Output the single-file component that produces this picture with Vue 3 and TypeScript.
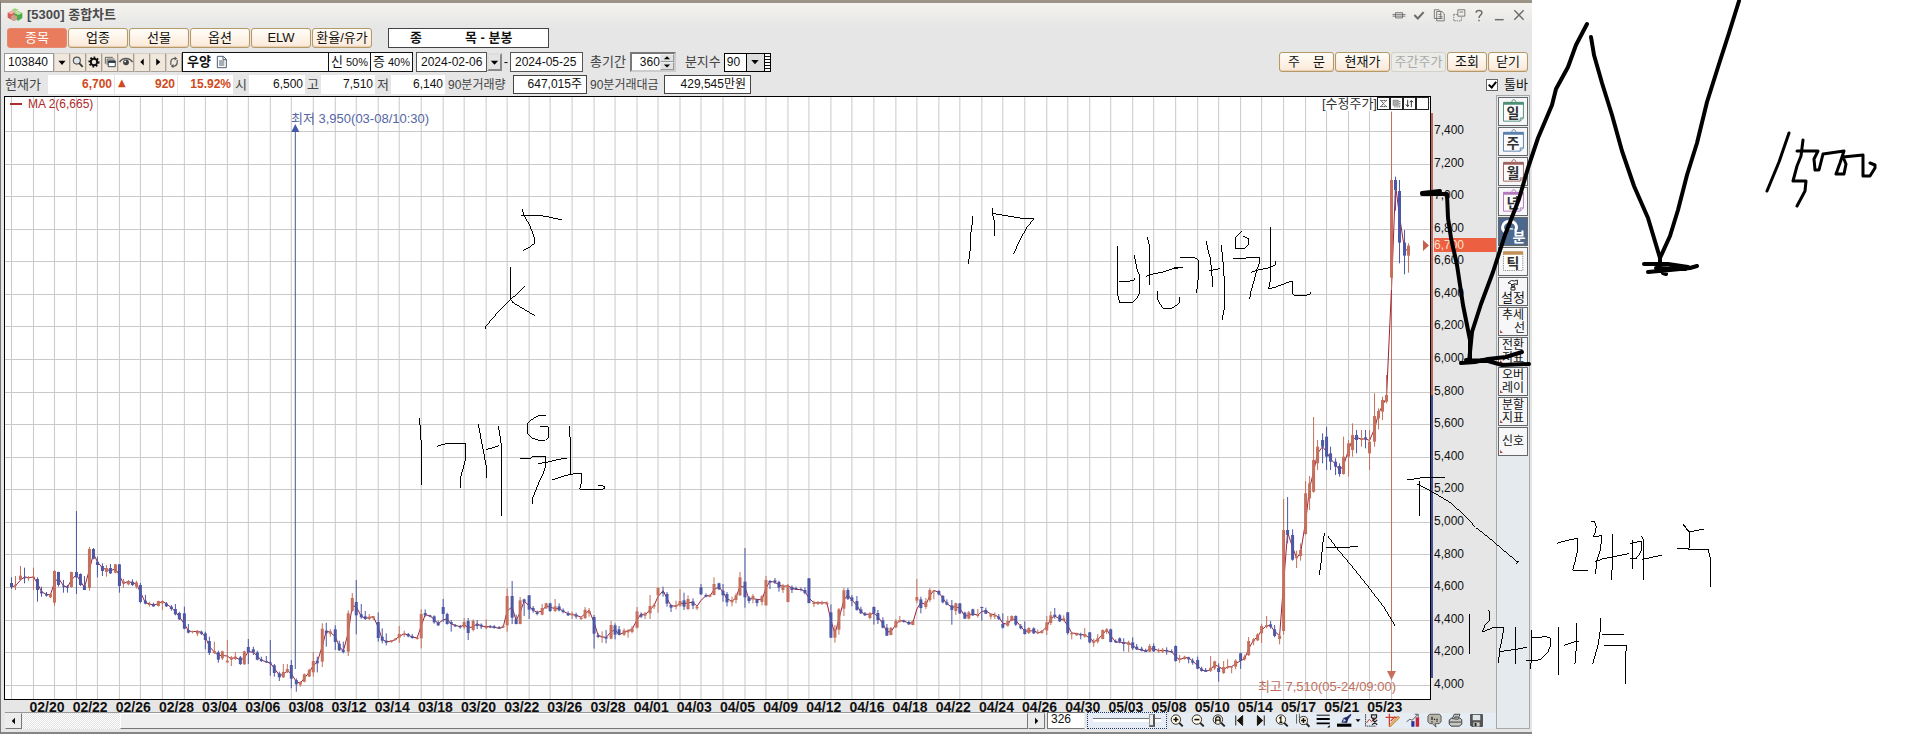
<script setup lang="ts">
import { computed, ref } from 'vue'

type Candle = { x: number; up: boolean; high: number; top: number; bottom: number; low: number }

/* direction, high, body top, body bottom, low; levels are thirds of a pixel */
const series = `
b 262 279 291 297|r 258 284 287 300|r 228 257 270 272|b 233 262 264 280|r 258 262 265 272|r 233 260 264 300|b 262 267 300 335|b 290 304 310 320|b 306 312 317 320|r 310 312 322 324
r 240 243 338 347|b 245 246 285 290|b 270 287 290 308|b 285 290 293 308|r 245 246 291 293|b 63 246 262 312|b 250 252 285 288|b 258 287 300 300|r 171 177 294 302|b 174 177 206 208
b 200 215 225 262|b 220 228 243 258|r 225 234 246 260|b 222 234 250 252|r 222 223 248 250|b 222 223 288 308|r 267 274 280 292|r 270 273 283 286|b 268 275 285 288|r 272 277 290 296
b 279 285 336 340|b 315 332 341 343|r 335 342 345 350|b 338 342 349 351|r 332 333 348 350|r 332 334 340 360|b 336 340 349 351|b 345 350 357 362|b 342 357 373 376|b 365 369 388 390
b 350 370 416 418|b 402 420 428 430|r 422 423 426 430|r 420 424 431 438|b 422 425 431 435|b 425 430 450 478|b 440 453 489 495|r 455 483 489 492|b 482 487 509 518|r 482 484 505 510
r 450 512 517 518|r 498 502 509 528|r 486 500 507 510|b 498 502 522 525|r 482 484 523 524|b 447 471 486 522|b 470 478 487 495|b 482 487 509 511|b 500 508 513 516|b 498 513 517 519
b 450 517 521 557|b 522 526 549 560|b 545 550 562 573|r 522 546 562 564|r 522 537 547 549|b 510 525 566 595|b 565 570 583 605|r 574 576 584 590|r 550 553 575 577|r 536 540 560 561
r 486 513 547 560|b 500 512 520 547|r 400 416 515 531|b 398 422 430 470|r 417 424 431 440|b 406 418 456 480|b 452 461 481 483|b 455 480 486 490|r 361 370 485 498|r 309 324 363 365
b 270 336 376 433|b 342 373 382 386|b 363 379 387 390|r 372 380 387 390|r 378 379 384 390|b 367 396 444 455|b 415 440 452 460|b 430 452 458 466|r 450 451 456 458|r 444 446 450 452
r 408 432 443 458|r 422 431 434 440|b 429 432 439 442|b 432 438 444 446|r 441 443 447 449|r 358 372 445 475|b 358 369 376 380|b 374 377 380 382|b 376 379 397 401|b 392 397 406 408
b 327 351 372 396|b 368 372 402 404|b 390 396 402 425|b 402 405 409 411|b 405 409 412 416|r 384 396 412 418|b 384 393 429 450|r 388 393 420 424|b 390 403 408 417|b 400 404 409 417
r 388 410 414 418|b 405 409 411 414|b 405 409 413 416|b 408 412 416 417|r 405 408 412 414|r 295 318 406 425|b 273 318 383 402|b 374 388 402 403|r 321 331 402 403|b 326 328 336 378
b 315 316 359 387|b 348 354 362 368|b 362 367 372 376|r 342 354 374 376|r 338 340 355 357|b 338 340 363 366|r 327 349 363 366|b 340 349 361 364|b 355 361 366 370|b 364 370 376 378
r 365 371 376 387|b 368 374 380 386|r 380 383 387 390|r 351 359 384 387|r 354 363 370 380|b 375 381 431 476|b 430 436 441 444|r 424 439 443 458|b 420 441 446 460|r 393 405 446 448
b 400 406 434 448|b 408 418 434 436|r 415 421 434 438|r 418 422 427 443|r 408 415 426 430|r 351 364 413 416|b 367 374 380 384|r 366 370 377 387|r 315 348 370 387|r 340 345 350 357
r 292 294 316 368|b 290 306 310 320|b 306 312 341 350|b 343 345 353 366|r 332 345 350 358|r 297 333 347 350|b 308 331 350 360|r 316 327 357 360|b 325 334 347 357|r 345 350 355 360
b 282 292 313 315|b 310 315 320 322|r 312 316 320 322|r 262 282 315 316|b 278 280 298 300|b 282 302 316 335|b 306 312 337 349|r 320 330 337 349|r 310 316 330 340|r 246 262 316 318
b 174 275 322 353|b 318 322 333 340|r 312 318 328 340|b 326 329 339 349|r 315 319 336 346|r 258 270 346 347|b 270 273 278 297|b 264 271 276 282|b 272 276 293 305|r 282 286 300 309
r 282 288 336 337|b 286 291 300 309|b 290 294 297 300|b 292 297 300 304|b 292 300 309 313|b 264 265 339 340|r 332 338 342 351|r 333 339 342 345|r 332 338 341 345|r 334 339 343 345
b 343 367 443 444|r 405 418 443 458|r 354 358 419 434|r 294 301 356 378|b 294 300 327 330|b 315 322 333 349|b 318 333 360 362|b 350 358 370 372|b 366 370 376 378|r 366 370 384 388
b 349 351 370 404|b 360 369 390 402|b 382 391 413 415|b 402 413 437 438|r 411 414 435 436|r 387 393 412 414|r 378 390 395 398|b 389 392 396 398|b 392 396 403 405|r 391 393 405 406
r 267 321 332 340|b 320 328 354 370|r 324 334 351 357|r 294 300 330 336|r 300 302 305 328|b 300 303 313 316|b 315 318 337 340|b 328 337 344 346|b 330 346 360 404|r 338 340 363 375
b 339 340 370 372|b 365 368 386 387|r 363 367 386 388|b 356 358 376 378|r 357 375 378 383|b 350 351 354 392|b 353 360 371 372|r 370 373 380 388|r 367 376 380 387|b 372 380 387 390
b 370 402 413 416|r 378 393 407 410|r 376 378 393 394|b 376 378 404 408|b 402 408 415 418|b 394 417 432 434|r 412 414 429 432|b 412 415 430 432|r 418 427 430 432|r 420 423 429 431
r 378 397 421 435|r 364 376 399 405|b 354 374 380 386|b 372 376 394 396|r 376 385 390 394|b 366 367 429 434|r 426 429 433 448|r 428 432 436 438|b 428 432 436 448|r 414 432 440 443
b 426 427 457 460|r 446 453 459 470|r 432 445 455 460|r 418 420 447 448|r 414 418 426 432|b 416 418 456 457|b 448 453 457 459|b 442 445 455 460|b 445 457 462 484|r 452 457 465 486
b 442 457 475 480|b 462 470 478 480|b 470 476 482 484|b 476 481 486 486|r 462 468 485 486|b 460 468 484 486|r 475 480 484 489|r 474 481 485 489|b 472 480 484 494|b 478 484 487 489
b 466 468 513 515|r 495 505 510 518|r 497 500 507 509|b 500 502 508 520|b 505 512 518 524|b 500 510 536 538|b 530 536 543 545|b 534 540 545 546|r 498 533 542 546|r 512 514 535 540
b 520 534 546 575|r 513 531 549 552|r 508 530 533 537|r 528 530 533 550|r 508 512 530 538|b 488 490 512 537|r 494 500 508 512|r 441 453 495 498|r 444 448 454 466|r 430 433 451 453
r 402 408 430 459|r 378 405 410 415|b 393 403 410 416|b 405 418 438 442|r 430 437 447 463|r 27 120 423 434|b 21 120 135 160|b 118 135 209 212|r 182 198 205 234|r 160 180 198 212
r -27 10 132 135|r -42 -20 25 60|r -219 -90 5 8|r -150 -130 -80 -60|b -170 -150 -130 -80|b -190 -160 -100 -60|b -130 -110 -85 -60|b -95 -85 -70 -45|b -80 -72 -48 -40|r -160 -100 -48 -46
r -150 -140 -100 -40|r -200 -165 -120 -100|b -180 -165 -150 -110|r -180 -155 -150 -130|b -180 -158 -152 -125|r -180 -145 -110 -60|r -290 -222 -145 -130|r -245 -237 -215 -182|r -280 -270 -235 -210|r -345 -285 -265 -260
r -930 -930 -637 -600|b -940 -930 -900 -838|b -930 -897 -742 -680|b -780 -742 -703 -647|r -740 -733 -703 -652`

const pitch = 4.315
const firstX = 11.5
const levelY = (v: number) => 490 + v / 3

const candles = computed<Candle[]>(() =>
  series.trim().split(/[|\n]/).map((row, i) => {
    const [kind, ...n] = row.trim().split(' ')
    const [high, top, bottom, low] = n.map((v) => levelY(Number(v)))
    return { x: Math.round(firstX + i * pitch - 0.5), up: kind === 'r', high, top, bottom, low }
  }),
)
const average = computed(() =>
  candles.value
    .map((c, i, all) => {
      const close = (k: Candle) => (k.up ? k.top : k.bottom)
      const p = all[Math.max(0, i - 1)]
      return `${c.x + 0.5},${((close(c) + close(p)) / 2).toFixed(1)}`
    })
    .join(' '),
)
const columns = Array.from({ length: 65 }, (_, i) => Math.round(11 + i * 21.575) + 0.5)
const rows = Array.from({ length: 18 }, (_, i) => Math.round(131 + i * 32.57) + 0.5)
const prices = Array.from({ length: 18 }, (_, i) => (7400 - i * 200).toLocaleString('en-US'))
const dates = '02/20 02/22 02/26 02/28 03/04 03/06 03/08 03/12 03/14 03/18 03/20 03/22 03/26 03/28 04/01 04/03 04/05 04/09 04/12 04/16 04/18 04/22 04/24 04/26 04/30 05/03 05/08 05/10 05/14 05/17 05/21 05/23'.split(' ')

const tabs = ['종목', '업종', '선물', '옵션', 'ELW', '환율/유가']
const active = ref('종목')
const code = ref('103840')
const fromDate = ref('2024-02-06')
const toDate = ref('2024-05-25')
const span = ref('360')
const unit = ref('90')
const count = ref('326')
const zoomLevel = ref(90)
const showTools = ref(true)

const calendars = [
  { label: '일', color: '#4f8f74' },
  { label: '주', color: '#5b82ad' },
  { label: '월', color: '#a0635f' },
  { label: '년', color: '#b479bd' },
]
const tools = ['추세 선', '전환 지표', '오버 레이', '분할 지표', '신호']
</script>

<template>
  <div class="desk">
    <main class="window">
      <header class="title">
        <svg class="logo" viewBox="0 0 48 42"><path d="M2 14l12-6 10 5v16l-10 6-12-6z" fill="#d95b57" /><path d="M2 14l12-6 10 5-11 6z" fill="#f4b3ae" /><path d="M13 6l10-5 12 4-10 7z" fill="#a5d27c" /><path d="M22 16l12-6 12 5v15l-12 8-12-6z" fill="#4da84a" /><path d="M22 16l12-6 12 5-12 6z" fill="#b8e19a" /><path d="M12 24l8-4 10 5v10l-9 5-9-5z" fill="#c8a08a" /></svg>
        <h1>[5300] 종합차트</h1>
        <nav class="winbtns">
          <button aria-label="연결"><svg viewBox="0 0 48 48"><path d="M2 22h44M2 28h44M12 16h24v18H12z" /></svg></button>
          <button aria-label="고정"><svg viewBox="0 0 48 48"><path d="M8 24l12 12 20-22" stroke-width="7" /></svg></button>
          <button aria-label="복사"><svg viewBox="0 0 48 48"><path d="M8 6h16l6 6v24H8zM16 12h18l8 8v24H16zM22 22h10M22 30h14M22 36h14" /></svg></button>
          <button aria-label="분리"><svg viewBox="0 0 48 48"><path d="M20 6h24v22H20zM26 14h12" /><path d="M6 22h12M6 22v22h26V32" stroke-dasharray="5 3" /></svg></button>
          <button aria-label="도움말"><svg viewBox="0 0 48 48"><path d="M14 16c0-10 20-10 20 0 0 8-10 8-10 18M24 40v5" stroke-width="5" /></svg></button>
          <button aria-label="최소화"><svg viewBox="0 0 48 48"><path d="M10 40h30" stroke-width="5" /></svg></button>
          <button aria-label="창 닫기"><svg viewBox="0 0 48 48"><path d="M8 8l32 32M40 8L8 40" stroke-width="5" /></svg></button>
        </nav>
      </header>

      <div class="line tabs">
        <button v-for="t in tabs" :key="t" class="soft tab" :class="{ on: t === active }" @click="active = t">{{ t }}</button>
        <div class="kind"><span>종</span><span>목 - 분봉</span></div>
      </div>

      <div class="line query">
        <input v-model="code" class="code" aria-label="종목코드" />
        <button class="mini" aria-label="목록"><svg viewBox="0 0 48 48"><path d="M12 20h24L24 34z" fill="#000" /></svg></button>
        <button class="mini" aria-label="검색"><svg viewBox="0 0 48 48"><circle cx="20" cy="19" r="12" fill="#dfe6ea" stroke="#555" stroke-width="4" /><path d="M28 28l12 13" stroke="#333" stroke-width="6" /></svg></button>
        <button class="mini" aria-label="설정"><svg viewBox="0 0 48 48"><circle cx="24" cy="24" r="11" fill="none" stroke="#111" stroke-width="7" /><circle cx="24" cy="24" r="16" fill="none" stroke="#111" stroke-width="6" stroke-dasharray="6 6" /></svg></button>
        <button class="mini" aria-label="창"><svg viewBox="0 0 48 48"><path d="M8 30V8h26M14 34V14h26" fill="none" stroke="#555" stroke-width="3" /><path d="M18 20h24v20H18z" fill="#fff" stroke="#234" stroke-width="3" /><path d="M18 20h24v7H18z" fill="#234" /></svg></button>
        <button class="mini" aria-label="관심"><svg viewBox="0 0 48 48"><path d="M2 24C12 8 36 8 46 24" fill="none" stroke="#555" stroke-width="5" /><circle cx="24" cy="25" r="10" fill="#444" /><circle cx="21" cy="22" r="3" fill="#fff" /></svg></button>
        <button class="mini" aria-label="이전"><svg viewBox="0 0 48 48"><path d="M30 12v24L18 24z" fill="#000" /></svg></button>
        <button class="mini" aria-label="다음"><svg viewBox="0 0 48 48"><path d="M18 12v24l14-12z" fill="#000" /></svg></button>
        <button class="mini" aria-label="새로고침"><svg viewBox="0 0 48 48"><path d="M28 12h-6q-9 2-9 14v8M20 38h6q9-2 9-14v-8" fill="none" stroke="#555" stroke-width="4" /><path d="M26 5l9 7-9 7zM22 31l-9 7 9 7z" fill="#555" /></svg></button>
        <div class="name"><b>우양</b><svg viewBox="0 0 36 40"><path d="M4 3h18l9 9v25H4zM21 3v10h10M9 17h16M9 23h16M9 29h16" fill="none" stroke="#4d5d70" stroke-width="3" /></svg></div>
        <div class="rate"><span>신</span>50%</div>
        <div class="rate"><span>증</span>40%</div>
        <input v-model="fromDate" class="date from" aria-label="시작일" />
        <button class="drop" aria-label="달력"><svg viewBox="0 0 48 48"><path d="M8 16h32L24 34z" fill="#000" /></svg></button>
        <span class="dash">-</span>
        <input v-model="toDate" class="date to" aria-label="종료일" />
        <label class="lab total" for="span">총기간</label>
        <span class="spin"><input id="span" v-model="span" /><span class="steps"><button aria-label="늘림"><svg viewBox="0 0 36 21"><path d="M7 15h22L18 4z" /></svg></button><button aria-label="줄임"><svg viewBox="0 0 36 21"><path d="M7 5h22L18 16z" /></svg></button></span></span>
        <label class="lab unit" for="unit">분지수</label>
        <span class="combo"><select id="unit" v-model="unit"><option>90</option><option>60</option></select><svg viewBox="0 0 48 48"><path d="M13 18h22L24 31z" /></svg></span>
        <span class="stripes"></span>
        <div class="actions">
          <button class="soft wide">주&emsp;문</button>
          <button class="soft wide">현재가</button>
          <button class="soft wide" disabled>주간주가</button>
          <button class="soft slim">조회</button>
          <button class="soft slim">닫기</button>
        </div>
      </div>

      <div class="line quote">
        <span class="lab q1">현재가</span>
        <output class="cell c1 hot">6,700</output>
        <output class="cell c2 hot"><i>▲</i>920</output>
        <output class="cell c3 hot">15.92%</output>
        <span class="lab ch">시</span>
        <output class="cell c4">6,500</output>
        <span class="lab ch">고</span>
        <output class="cell c5">7,510</output>
        <span class="lab ch">저</span>
        <output class="cell c6">6,140</output>
        <span class="lab q2">90분거래량</span>
        <output class="cell framed c7">647,015주</output>
        <span class="lab q3">90분거래대금</span>
        <output class="cell framed c8">429,545만원</output>
        <label class="toggle"><input v-model="showTools" type="checkbox" />툴바</label>
      </div>

      <div class="body">
        <section class="left">
          <div class="chartrow">
            <div class="plot">
              <svg class="canvas" viewBox="5 97 1426 602" preserveAspectRatio="none" role="img" aria-label="우양 90분봉">
                <g stroke="#c9c9c9" shape-rendering="crispEdges">
                  <line v-for="x in columns" :key="x" :x1="x" :x2="x" y1="97" y2="699" />
                  <line v-for="y in rows" :key="y" x1="5" x2="1431" :y1="y" :y2="y" />
                </g>
                <path d="M295.500 128V669" stroke="#3f5788" />
                <path d="M295.500 124l4 8h-8z" fill="#4358a8" />
                <path d="M1392.500 112V674" stroke="#c4705c" />
                <path d="M1388 671h9l-4.500 9z" fill="#c4705c" />
                <polyline :points="average" fill="none" stroke="#9c2038" stroke-width="1" />
                <g v-for="(c, i) in candles" :key="i" :fill="c.up ? '#c4705c' : '#4c57a6'">
                  <rect :x="c.x" :y="c.high" width="1" :height="c.low - c.high" />
                  <rect :x="c.x - 1" :y="c.top" width="3" :height="Math.max(1, c.bottom - c.top)" />
                </g>
                <path d="M1424 240v11l6-5.500z" fill="#c4604c" />
              </svg>
              <div class="legend"><i></i>MA 2(6,665)</div>
              <div class="low">최저 3,950(03-08/10:30)</div>
              <div class="high">최고 7,510(05-24/09:00)</div>
              <div class="adjust">
                <span>[수정주가]</span>
                <button aria-label="축소"><svg viewBox="0 0 36 36"><path d="M8 8h20L18 17zM8 28h20L18 19z" fill="none" stroke="#222" stroke-width="3" stroke-dasharray="4 2" /></svg></button>
                <button aria-label="겹침"><svg viewBox="0 0 36 36"><path d="M7 7h17v17H7z" fill="#aaa" stroke="#777" stroke-width="2" /><path d="M29 10v19H10" fill="none" stroke="#222" stroke-width="3" stroke-dasharray="3 3" /></svg></button>
                <button aria-label="뒤집기"><svg viewBox="0 0 36 36"><path d="M12 6v22M6 21l6 7 4-5M24 30V9M19 14l5-6 6 6" fill="none" stroke="#222" stroke-width="3" /></svg></button>
                <button aria-label="빈칸"></button>
              </div>
            </div>
            <div class="axis">
              <span class="bar"></span>
              <span v-for="p in prices" :key="p">{{ p }}</span>
              <b class="now">6,700</b>
            </div>
          </div>
          <div class="dates"><span v-for="d in dates" :key="d">{{ d }}</span></div>
          <div class="bottom">
            <div class="scroll">
              <button aria-label="왼쪽"><svg viewBox="0 0 48 48"><path d="M29 13v22L18 24z" /></svg></button>
              <span class="track"></span><span class="thumb"></span>
              <button aria-label="오른쪽"><svg viewBox="0 0 48 48"><path d="M19 13v22l11-11z" /></svg></button>
            </div>
            <input v-model="count" class="count" aria-label="봉 개수" />
            <span class="slider"><input v-model="zoomLevel" type="range" min="0" max="100" aria-label="확대" /></span>
            <div class="icons">
              <button aria-label="확대"><svg viewBox="0 0 48 48"><g class="lens"><circle cx="22" cy="21" r="15" /><path d="M33 32l11 11" /></g><path d="M14 21h16M22 13v16" stroke="#111" stroke-width="5" /></svg></button>
              <button aria-label="축소"><svg viewBox="0 0 48 48"><g class="lens"><circle cx="22" cy="21" r="15" /><path d="M33 32l11 11" /></g><path d="M14 21h16" stroke="#111" stroke-width="5" /></svg></button>
              <button aria-label="전체"><svg viewBox="0 0 48 48"><g class="lens"><circle cx="22" cy="21" r="15" /><path d="M33 32l11 11" /></g><path d="M15 31V17l4-5h6l4 5v14M15 23h14" fill="none" stroke="#111" stroke-width="4" /></svg></button>
              <button aria-label="처음"><svg viewBox="0 0 48 48"><path d="M12 8v32M34 8v32L17 24z" fill="#18140a" stroke="#18140a" stroke-width="3" /></svg></button>
              <button aria-label="끝"><svg viewBox="0 0 48 48"><path d="M36 8v32M14 8v32l17-16z" fill="#18140a" stroke="#18140a" stroke-width="3" /></svg></button>
              <button aria-label="기본"><svg viewBox="0 0 48 48"><g class="lens"><circle cx="22" cy="21" r="15" /><path d="M33 32l11 11" /></g><path d="M17 17l5-4v17M17 30h10" fill="none" stroke="#111" stroke-width="4" /></svg></button>
              <button aria-label="구간 확대"><svg viewBox="0 0 48 48"><path d="M5 4v30M14 2v14" stroke="#555" stroke-width="3" /><g class="lens"><circle cx="27" cy="24" r="13" /><path d="M37 34l9 10" /></g><path d="M19 24h16M27 16v16" stroke="#111" stroke-width="5" /></svg></button>
              <button aria-label="선 굵기"><svg viewBox="0 0 48 48"><path d="M2 7h42" stroke="#000" stroke-width="3" /><path d="M2 19h42M2 33h42" stroke="#000" stroke-width="6" /><path d="M44 38v8h-8z" /></svg></button>
              <button aria-label="선 색"><svg viewBox="0 0 48 48"><path d="M0 34h46v10H0z" /><path d="M14 30l6-14 12-4L44 2l2 4-10 14-4 12z" fill="#222c6a" /><path d="M21 17l8 8-9 4z" fill="#cdd6ea" /></svg></button>
              <button class="caret" aria-label="선 색 목록"><svg viewBox="0 0 18 48"><path d="M1 20h16l-8 9z" /></svg></button>
              <button aria-label="지표"><svg viewBox="0 0 48 48"><path d="M5 4v38h34" fill="none" stroke="#333" stroke-width="3" stroke-dasharray="5 2" /><path d="M8 32l9-12 8 8 8-16" fill="none" stroke="#c33" stroke-width="3" /><path d="M24 6h16v8l-8 7-8-7zM28 22l14 16M42 22L26 38" fill="none" stroke="#222" stroke-width="4" /></svg></button>
              <button aria-label="그리기"><svg viewBox="0 0 48 48"><path d="M2 14h42M14 2v42" stroke="#d23b2b" stroke-width="4" /><path d="M14 38l28-28 5 5-30 29z" fill="#efb565" stroke="#a56a1f" stroke-width="2" /><path d="M18 26l14-14" stroke="#d23b2b" stroke-width="4" /></svg></button>
              <button aria-label="통계"><svg viewBox="0 0 48 48"><path d="M17 26h10v18H17z" fill="#27309a" /><path d="M31 14h11v30H31z" fill="#c5283c" /><path d="M2 28l10-8 8 3L38 4M28 4h11v10" fill="none" stroke="#555" stroke-width="3" /></svg></button>
              <button aria-label="메모"><svg viewBox="0 0 48 48"><path d="M8 4h32l5 6v18l-6 6H26l3 11-12-11H9l-6-6V10z" fill="#b9b7ac" stroke="#55534b" stroke-width="3" /><path d="M16 12v10M16 26v4M22 20h4M30 20h4M30 26h4" stroke="#222" stroke-width="4" /></svg></button>
              <button aria-label="인쇄"><svg viewBox="0 0 48 48"><path d="M4 22l8-6h26l6 6v14l-8 6H10l-6-6z" fill="#c8c8c2" stroke="#333" stroke-width="3" /><path d="M14 18l6-14h18l-6 16z" fill="#fff" stroke="#333" stroke-width="3" /><path d="M5 29h36M21 10h12M19 15h12" stroke="#333" stroke-width="3" /></svg></button>
              <button aria-label="저장"><svg viewBox="0 0 48 48"><path d="M5 5h38v38H9l-4-4z" fill="#555" stroke="#222" stroke-width="2" /><path d="M12 6h24v17H12z" fill="#dfe5e8" /><path d="M14 30h20v13H14z" fill="#ccc" /><path d="M18 32h6v10h-6z" fill="#222" /></svg></button>
            </div>
          </div>
        </section>

        <aside v-if="showTools" class="side">
          <button v-for="c in calendars" :key="c.label" class="tool">
            <svg viewBox="0 0 84 84"><path d="M14 14h62v48L66 72H14z" fill="#fcfcff" :stroke="c.color" stroke-width="3" /><path d="M14 12h62v9H14z" :fill="c.color" /><path d="M40 12c0-9 12-9 12 0M66 72V62h10" fill="none" :stroke="c.color" stroke-width="3" /></svg>
            <b>{{ c.label }}</b>
          </button>
          <button class="tool picked"><svg viewBox="0 0 84 84"><path d="M18 42C6 34 10 12 32 10c20 0 28 18 18 30" fill="none" stroke="#fff" stroke-width="9" /><path d="M32 20v14h12" fill="none" stroke="#fff" stroke-width="4" /></svg><b>분</b></button>
          <button class="tool tick"><svg viewBox="0 0 84 84"><path d="M14 14h60v56H14z" fill="#fff" stroke="#888" stroke-width="3" stroke-dasharray="4 3" /><path d="M13 10h62v11H13z" fill="#c09058" /></svg><b>틱</b></button>
          <button class="tool set"><svg viewBox="0 0 36 36"><path d="M3 12q10-12 20-6l8-3v14l-8-3-8 4-5-5zM14 17h8v6h-8zM12 25h12v8H12z" fill="#fff" stroke="#222" stroke-width="3" /></svg><span>설정</span></button>
          <button v-for="t in tools" :key="t" class="tool words"><span v-for="(w, k) in t.split(' ')" :key="w" :class="{ end: w === '선' && k }">{{ w }}</span></button>
        </aside>
      </div>
    </main>
    <div class="margin"></div>

    <svg class="ink" viewBox="0 0 1911 734" preserveAspectRatio="none" aria-hidden="true">
      <g class="thin">
        <g transform="translate(400 190) scale(.33333)">
          <path d="M367 57l4 16 15 28 11 23 7 24v12l-13 10-21 11M364 76h49l30 4 24 6 19 3M331 231v97l8 10 65 39M374 289l-20 20-26 23-30 30-40 46v8M58 685l3 30 3 50v120M111 769l30-9h55v50l-8 30-6 20-1 33M235 702l8 45 9 45 7 40v32M259 778l20-5 17-6M295 709l5 30 4 26v212M438 676h-18l-16 7-18 12-4 10v25l14 14 20 7h20l8-8 2-16v-14l-6-4h-19M360 805h30l8-5h39v30l-10 26-14 30-14 36v20M415 821l30-5 30-8 25-3M509 709l2 60 1 85M457 869l30-9 22-7 20-2h16v22l-6 25h10l42 2 24-4v-6l-8-3h-12" />
        </g>
        <g transform="translate(940 190) scale(.33333)">
          <path d="M97 79l-1 26-4 30-2 50-5 38M157 55l1 20 5 20v42M158 70l28 5 30 5 30 5 35 2-20 25-20 35-20 45M532 169v140l7 29h38l20-22 1-60-7-20-5-25-3-15M538 274h27l20-5v-6M622 142l7 26v118M619 260l10-6 40-8 30-10 29-4h-20l-20 8M652 302v25l8 15 12 15h20l12-8 14-9v-18M720 202h44l12 10v40l-6 56M799 154l5 26 7 26 5 50 3 34M808 241l20-2 11-3M844 165l6 60 3 50v70l-2 28-4 4 1 12M907 124l-14 10-8 12 2 31h26l12-12 1-18-10-6h-8M880 206h36l4-4h39v16l-8 20-8 30-10 36-4 22M932 248l22-8 30-6 22-8v-14M991 112v160l-5 24 22-5 20-8 20-7h10v36l4 4h36l14-5v-5" />
        </g>
        <g transform="translate(1240 460) scale(.33333)">
          <path d="M501 59l30-3 16-4h69M539 63v104M532 72l35 18 60 35 40 35 40 42 50 40 40 34 38 32M830 311l8-8M254 219l-6 32-5 60-5 34M264 229l30 40 50 60 46 58 40 52 36 60M259 262h60l34-3M686 465h3v116M745 451l5 8v20l-14 14-7 18v4l30-12h32l-4 30-9 40-2 36M780 575l40-6 20-3 20-4M826 502v109M875 510v80l-4 38M877 534l40-4 14 4 2 20-10 24-20 20-20 4h-26M956 502v60l1 82M972 556l26-9 18-4M1010 489v60l-5 62M1082 475v30l-8 50-16 58M1085 523h67M1092 556h67l-3 50 1 67M951 250l30-9 33-6v30l-9 40-7 26h46M1054 184h9l6 16-4 20-6 10 26-3-3 40-12 36-3 38M1065 305l25-9 30-6 46-9M1117 223v80l-2 56M1178 240v86M1170 252l20-6h16v20l-10 20-8 10h-18M1204 228l6 10v122M1206 298l30-6 30-7" />
        </g>
        <path d="M1683 524l6 8v16l-12 1M1689 532l15-3M1688 549h20l2 8v30" />
      </g>
      <g class="thick">
        <path d="M1422 193l18-2M1422 194h25l1 24 3 20 6 27 6 40 7 35v20M1469 362l3-30 9-28 12-32 12-37 14-36 9-31 10-30 14-33 4-16 12-22 8-22 11-21M1591 37l3 18 8 28 10 32 10 36 12 35 14 32 12 40v10M1660 258l10-22 8-26 9-35 10-32 10-41 12-38 10-31 10-32M1461 363l14-1 13-3 18-2 16-5M1466 360l22 1 14 4 27-1M1644 264h24l20 3M1648 272l22-2 20-2 7-2M1656 268l30 1M1663 273l3 1" />
        <path class="pen" d="M1789 133l-10 29-12 29M1803 140l-2 16-4 10-4 15h13l-1 10-8 15M1797 151h21l-4 8 1 11h4l4-16 21-3-4 12-4 11h8l2-10-3-7 20-2v21h7l5-8v-3l-5-2" />
      </g>
    </svg>
  </div>
</template>

<style>
body {
  margin: 0;
  background: #fff;
}
</style>

<style scoped>
* {
  box-sizing: border-box;
}
.desk {
  position: relative;
  display: flex;
  height: 100vh;
  min-height: 640px;
  overflow: hidden;
  font: 13px/16px 'Liberation Sans', 'Noto Sans CJK KR', sans-serif;
  color: #111;
}
.window {
  display: flex;
  flex: 1;
  flex-direction: column;
  min-width: 0;
  padding-left: 3px;
  border-top: 3px solid #9d9488;
  border-bottom: 2px solid #858585;
  border-left: 1px solid #77777a;
  background: linear-gradient(#f4f3ee, #e6e6e6 24px);
}
.margin {
  flex: 0 0 379px;
}
button {
  margin: 0;
  padding: 0;
  border: 0;
  background: none;
  font: inherit;
  color: inherit;
}
input,
select {
  min-width: 0;
  margin: 0;
  padding: 0;
  border: 0;
  border-radius: 0;
  background: #fff;
  font: inherit;
  font-size: 12px;
  color: inherit;
  appearance: none;
}
svg {
  display: block;
}
.title {
  display: flex;
  flex: 0 0 24px;
  align-items: center;
  padding: 0 5px 0 3px;
}
.logo {
  width: 16px;
  height: 14px;
  margin-right: 4px;
}
h1 {
  flex: 1;
  margin: 0;
  font-size: 13px;
  line-height: 16px;
  color: #4a4a4a;
}
.winbtns {
  display: flex;
  gap: 4px;
}
.winbtns svg {
  width: 16px;
  height: 14px;
  fill: none;
  stroke: #6c6c6c;
  stroke-width: 3;
}
.line {
  display: flex;
  flex: none;
  align-items: center;
}
.line > * {
  flex-shrink: 0;
}
.tabs {
  height: 22px;
  gap: 1px;
  padding-left: 3px;
}
.soft {
  height: 20px;
  border: 1px solid #b39a66;
  border-radius: 3px;
  background: linear-gradient(#fffdf8, #fbe9d8);
  box-shadow: inset 0 -1px 1px #e9cdb2;
  line-height: 16px;
  white-space: nowrap;
}
.soft:disabled {
  border-color: #d5d1c8;
  background: #ebebe8;
  box-shadow: none;
  color: #aaa;
}
.tab {
  width: 60px;
}
.tab.on {
  border-color: #e58a6c;
  background: #e97c5c;
  box-shadow: none;
  color: #fff;
}
.kind {
  display: flex;
  gap: 43px;
  width: 161px;
  height: 20px;
  margin-left: 15px;
  padding-left: 21px;
  border: 1px solid #444;
  background: #fff;
  font-weight: bold;
  line-height: 17px;
}
.query {
  height: 26px;
  padding-right: 4px;
}
.code {
  width: 50px;
  height: 19px;
  padding-left: 3px;
  border: 1px solid #999;
}
.mini {
  width: 16px;
  height: 19px;
  border: 1px solid #d8cfc0;
  border-right-color: #a8a096;
  border-bottom-color: #a8a096;
  background: #f0e8dc;
}
.mini svg {
  width: 14px;
  height: 14px;
}
.name {
  display: flex;
  align-items: center;
  gap: 5px;
  width: 147px;
  height: 20px;
  padding-left: 4px;
  border: 1px solid #111;
  background: #fff;
}
.name svg {
  width: 12px;
  height: 14px;
}
.rate {
  display: flex;
  justify-content: space-between;
  width: 42px;
  height: 20px;
  padding: 0 2px;
  border: 1px solid #111;
  border-left: 0;
  background: #fff;
  font-size: 11px;
  line-height: 18px;
}
.rate span {
  font-size: 13px;
}
.date {
  height: 20px;
  padding-left: 4px;
  border: 1px solid #555;
}
.from {
  width: 71px;
  margin-left: 3px;
}
.drop {
  width: 15px;
  height: 18px;
  border: 2px outset #ddd;
  background: #e4e4e4;
}
.drop svg {
  width: 11px;
  height: 11px;
}
.dash {
  width: 8px;
  text-align: center;
}
.to {
  width: 73px;
}
.lab {
  white-space: nowrap;
  color: #444;
}
.total {
  margin-left: 7px;
}
.spin {
  display: flex;
  width: 46px;
  height: 20px;
  margin-left: 4px;
  border: 2px inset #ccc;
  background: #fff;
}
.spin input {
  width: 28px;
  text-align: right;
}
.steps {
  display: flex;
  flex-direction: column;
  width: 14px;
}
.steps button {
  flex: 1;
  border: 1px outset #eee;
  background: #e2e2e2;
}
.steps svg {
  width: 12px;
  height: 6px;
}
.unit {
  margin-left: 9px;
}
.combo {
  display: flex;
  align-items: center;
  width: 41px;
  height: 19px;
  margin-left: 3px;
  border: 1px solid #000;
  background: #ddd;
}
.combo select {
  width: 22px;
  height: 17px;
  padding-left: 2px;
  border-right: 1px solid #000;
}
.combo svg {
  width: 16px;
  height: 16px;
}
.stripes {
  width: 6px;
  height: 19px;
  border: 1px solid #000;
  border-left: 0;
  background: repeating-linear-gradient(#fff 0 2px, #111 2px 3px);
}
.actions {
  display: flex;
  gap: 1px;
  margin-left: auto;
}
.wide {
  width: 55px;
}
.slim {
  width: 40px;
}
.quote {
  height: 19px;
  padding: 0 4px 0 1px;
}
.cell {
  height: 19px;
  padding-right: 2px;
  background: #fff;
  font-size: 12px;
  line-height: 18px;
  text-align: right;
}
.hot {
  color: #d04a20;
  font-weight: bold;
}
.hot i {
  float: left;
  margin-left: 3px;
  font: 10px/16px 'DejaVu Sans', sans-serif;
}
.framed {
  padding-right: 4px;
  border: 1px solid #444;
  line-height: 16px;
}
.q1 {
  width: 43px;
}
.c1 {
  width: 66px;
}
.c2 {
  width: 62px;
  margin-left: 1px;
}
.c3 {
  width: 55px;
  margin-left: 1px;
}
.ch {
  width: 16px;
  text-align: center;
}
.c4 {
  width: 56px;
}
.c5,
.c6 {
  width: 54px;
}
.q2,
.q3 {
  padding-left: 3px;
  font-size: 12px;
}
.q2 {
  width: 68px;
}
.c7 {
  width: 74px;
}
.q3 {
  width: 77px;
}
.c8 {
  width: 87px;
}
.toggle {
  display: flex;
  align-items: center;
  gap: 6px;
  margin-left: auto;
}
.toggle input {
  width: 12px;
  height: 12px;
  border: 1px solid #666;
}
.toggle input:checked::after {
  display: block;
  width: 3px;
  height: 6px;
  margin: 0 auto;
  border: solid #000;
  border-width: 0 2px 2px 0;
  transform: rotate(40deg);
  content: '';
}
.body {
  display: flex;
  flex: 1;
  min-height: 0;
  padding: 1px 2px 3px 0;
}
.left {
  display: flex;
  flex: 1;
  flex-direction: column;
  min-width: 0;
  padding-top: 1px;
}
.chartrow {
  display: flex;
  flex: 1;
  min-height: 0;
}
.plot {
  position: relative;
  flex: 1;
  border: 1px solid #000;
  background: #fff;
}
.canvas {
  width: 100%;
  height: 100%;
}
.legend,
.low,
.high,
.adjust {
  position: absolute;
  line-height: 14px;
  white-space: nowrap;
}
.legend {
  top: 0;
  left: 5px;
  display: flex;
  align-items: center;
  gap: 6px;
  font-size: 12px;
  color: #b02a2a;
}
.legend i {
  width: 12px;
  height: 2px;
  background: #b02a2a;
}
.low {
  top: 15px;
  left: 286px;
  color: #5566a5;
}
.high {
  right: 34px;
  bottom: 5px;
  color: #c0705c;
}
.adjust {
  top: 0;
  right: 1px;
  display: flex;
  background: #fff;
  color: #333;
}
.adjust button {
  width: 13px;
  height: 13px;
  border: 1px solid #222;
}
.adjust svg {
  width: 11px;
  height: 11px;
}
.axis {
  position: relative;
  display: flex;
  flex: 0 0 65px;
  flex-direction: column;
  justify-content: space-between;
  padding: 27px 0 9px 3px;
  font-size: 12px;
  line-height: 14px;
}
.bar {
  position: absolute;
  top: 17px;
  bottom: 22px;
  left: 0;
  width: 2px;
  background: linear-gradient(#bd6558 50%, #44509c 50%);
}
.now {
  position: absolute;
  top: 142px;
  right: 0;
  left: 3px;
  background: #ec5f40;
  color: #ffe2cc;
  font-weight: normal;
}
.dates {
  display: flex;
  justify-content: space-between;
  height: 12px;
  padding: 0 93px 0 25px;
  font-size: 14px;
  font-weight: bold;
  line-height: 14px;
}
.dates span {
  flex: 0 0 36px;
  text-align: center;
}
.bottom {
  display: flex;
  align-items: center;
  height: 17px;
  padding-left: 1px;
}
.scroll {
  display: flex;
  flex: 1;
  height: 17px;
  border-top: 1px solid #999;
}
.scroll button {
  flex: 0 0 17px;
  border: 1px solid #eee;
  border-right-color: #777;
  border-bottom-color: #777;
  background: #ececec;
}
.scroll svg {
  width: 15px;
  height: 14px;
}
.track {
  flex: 0 0 98px;
  background: repeating-conic-gradient(#fff 0 25%, #e2e2e2 0 50%) 0 0 / 2px 2px;
}
.thumb {
  flex: 1;
  border: 1px solid #fff;
  border-right-color: #777;
  border-bottom-color: #777;
  background: #efefef;
}
.count {
  width: 38px;
  height: 17px;
  margin-left: 2px;
  padding: 0 0 3px 3px;
  border: 1px solid #777;
  border-right-color: #eee;
}
.slider {
  display: flex;
  align-items: center;
  width: 80px;
  height: 17px;
  margin: 0 2px;
  padding: 0 5px;
  border: 1px dotted #223a6a;
  background: #e6edf6;
}
.slider input {
  width: 68px;
  height: 14px;
  background: linear-gradient(#777, #777) 0 4px / 100% 1px no-repeat, linear-gradient(#fff, #fff) 0 5px / 100% 3px no-repeat;
}
.slider input::-webkit-slider-thumb {
  width: 6px;
  height: 13px;
  border: 1px solid #999;
  border-right: 2px solid #555;
  border-bottom: 2px solid #666;
  background: #eee;
  appearance: none;
}
.icons {
  display: flex;
  gap: 6px;
  width: 327px;
  background: #e5ecf4;
}
.icons button {
  flex: 0 0 15px;
}
.icons svg {
  width: 15px;
  height: 15px;
}
.icons .caret {
  flex-basis: 6px;
  margin: 0 -3px;
}
.caret svg {
  width: 6px;
}
.lens {
  fill: #fff8e4;
  stroke: #222;
  stroke-width: 3;
}
.lens path {
  stroke-width: 6;
}
.side {
  display: flex;
  flex: 0 0 34px;
  flex-direction: column;
  gap: 1px;
  padding: 1px;
  border: 1px solid #a8a8a8;
  background: #e5eaee;
}
.tool {
  position: relative;
  flex: 0 0 29px;
  border: 1px solid #666;
  background: #f7f7f9;
  font-size: 13px;
  line-height: 13px;
}
.tool svg {
  width: 27px;
  height: 27px;
}
.tool b {
  position: absolute;
  top: 8px;
  right: 0;
  left: 0;
  font-size: 14px;
  line-height: 14px;
  text-align: center;
  color: #333;
}
.picked {
  background: #4d688f;
}
.tool.picked b {
  top: 12px;
  left: 12px;
  color: #fff;
}
.tool.set svg {
  width: 12px;
  height: 12px;
  margin: 0 auto;
}
.tool.set span {
  display: block;
}
.words {
  display: flex;
  flex-direction: column;
  justify-content: center;
  align-items: center;
}
.words span {
  font-size: 12px;
  line-height: 13px;
}
.words .end {
  align-self: flex-end;
  padding-right: 2px;
}
.words::after {
  position: absolute;
  bottom: 2px;
  left: 1px;
  border: solid transparent;
  border-width: 3px 0 0 3px;
  border-left-color: #a44;
  content: '';
}
.ink {
  position: absolute;
  inset: 0;
  width: 100%;
  height: 100%;
  pointer-events: none;
  fill: none;
  stroke: #000;
}
.thin {
  shape-rendering: crispEdges;
}
.thin g {
  stroke-width: 3;
}
.thick {
  stroke-width: 4;
  stroke-linecap: round;
  stroke-linejoin: round;
}
.pen {
  stroke-width: 3;
}
</style>
